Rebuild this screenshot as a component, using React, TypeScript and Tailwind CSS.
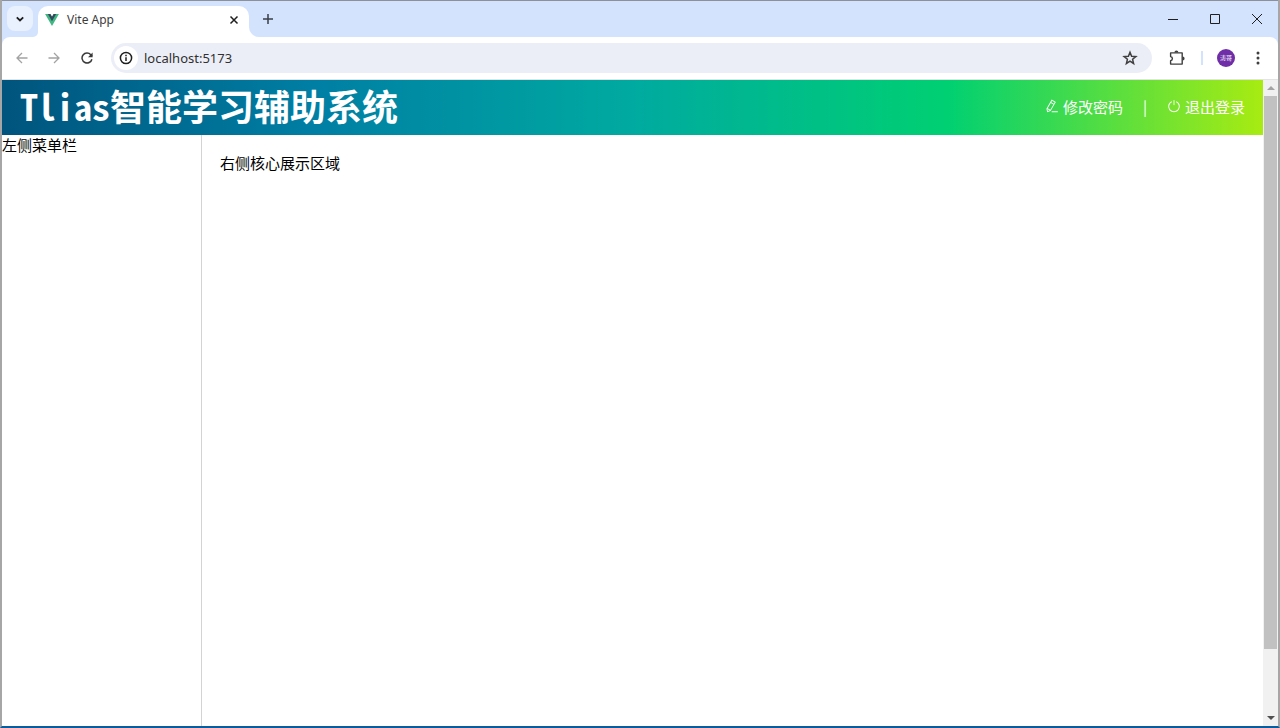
import { useState } from "react";

const iconButton = "flex items-center justify-center cursor-pointer";

function VueLogo() {
  return (
    <svg viewBox="0 0 196 170" className="w-[14px] h-3" aria-hidden="true">
      <path fill="#41b883" d="M120.8 0 98 39.5 75.2 0H0l98 170L196 0z" />
      <path fill="#35495e" d="M120.8 0 98 39.5 75.2 0H39.1L98 102 156.9 0z" />
    </svg>
  );
}

function TabStrip() {
  return (
    <div className="flex items-end h-9 bg-[#d3e2fd] shrink-0">
      <button aria-label="Search tabs" className={`${iconButton} w-[26px] h-[25px] ml-[5px] mb-[6px] rounded-lg bg-[#e9f1fe]`}>
        <svg viewBox="0 0 10 10" className="w-[10px] h-[10px]" fill="none" stroke="#1f1f1f" strokeWidth="1.8">
          <path d="M1.8 3.3 5 6.5l3.2-3.2" />
        </svg>
      </button>

      {/* Active tab */}
      <div className="flex items-end">
        <div className="w-[5px] h-2 bg-white">
          <div className="w-[5px] h-2 rounded-br-lg bg-[#d3e2fd]" />
        </div>
        <div className="flex items-center w-[211px] h-[31px] pl-[7px] pr-[7px] pb-1 rounded-t-[10px] bg-white">
          <VueLogo />
          <span className="ml-2 flex-1 text-[12px] leading-4 text-[#3c3c3c]">Vite App</span>
          <button aria-label="Close tab" className={`${iconButton} w-4 h-4`}>
            <svg viewBox="0 0 10 10" className="w-[10px] h-[10px]" stroke="#1f1f1f" strokeWidth="1.5">
              <path d="m1.5 1.5 7 7m0-7-7 7" />
            </svg>
          </button>
        </div>
        <div className="w-[10px] h-[10px] bg-white">
          <div className="w-[10px] h-[10px] rounded-bl-[10px] bg-[#d3e2fd]" />
        </div>
      </div>
      <button aria-label="New tab" className={`${iconButton} w-[18px] h-5 mb-2`}>
        <svg viewBox="0 0 12 12" className="w-3 h-3" stroke="#3a3f47" strokeWidth="1.5">
          <path d="M6 1v10M1 6h10" />
        </svg>
      </button>

      {/* Window controls */}
      <div className="flex ml-auto self-center">
        <button aria-label="Minimize" className={`${iconButton} w-[42px] h-8`}>
          <svg viewBox="0 0 10 10" className="w-[10px] h-[10px]" stroke="#1f1f1f">
            <path d="M0 5.5h10" />
          </svg>
        </button>
        <button aria-label="Maximize" className={`${iconButton} w-[42px] h-8`}>
          <svg viewBox="0 0 10 10" className="w-[10px] h-[10px]" fill="none" stroke="#1f1f1f">
            <path d="M.5.5h9v9h-9z" />
          </svg>
        </button>
        <button aria-label="Close" className={`${iconButton} w-[42px] h-8`}>
          <svg viewBox="0 0 10 10" className="w-[10px] h-[10px]" stroke="#1f1f1f">
            <path d="m0 0 10 10m0-10L0 10" />
          </svg>
        </button>
      </div>
    </div>
  );
}

function Toolbar() {
  const [starred, setStarred] = useState(false);

  return (
    <div className="bg-[#d3e2fd] shrink-0">
      <div className="flex items-center h-[43px] pl-[3px] pr-[10px] rounded-t-lg bg-white border-b border-[#e3e3e3]">
        <button aria-label="Back" className={`${iconButton} w-[33px] h-8`}>
          <svg viewBox="0 0 12 12" className="w-3 h-3" fill="none" stroke="#a3a3a3" strokeWidth="1.3">
            <path d="M11.5 6H1.2M6 1 1 6l5 5" />
          </svg>
        </button>
        <button aria-label="Forward" className={`${iconButton} w-8 h-8`}>
          <svg viewBox="0 0 12 12" className="w-3 h-3" fill="none" stroke="#a3a3a3" strokeWidth="1.3">
            <path d="M.5 6h10.3M6 1l5 5-5 5" />
          </svg>
        </button>
        <button aria-label="Reload" className={`${iconButton} w-[33px] h-8`}>
          <svg viewBox="0 0 12 12" className="w-3 h-3">
            <path fill="none" stroke="#3a3a3a" strokeWidth="1.5" d="M10.9 7.2A5 5 0 1 1 9.8 2.7L11 4" />
            <path fill="#3a3a3a" d="M11.6.5v4.7H7z" />
          </svg>
        </button>

        <div className="flex items-center flex-1 h-[30px] ml-2 pl-[3px] pr-3 rounded-full bg-[#ebeef7]">
          <button aria-label="Site information" className={`${iconButton} w-6 h-6 rounded-full bg-white`}>
            <svg viewBox="0 0 14 14" className="w-[14px] h-[14px]" fill="none" stroke="#1f1f1f" strokeWidth="1.5">
              <circle cx="7" cy="7" r="5.6" />
              <path d="M7 6.3v3.8M7 3.8v1.4" />
            </svg>
          </button>
          <input
            aria-label="Address"
            defaultValue="localhost:5173"
            className="flex-1 min-w-0 ml-[6px] bg-transparent text-[13px] leading-5 text-[#303030] outline-none"
          />
          <button aria-label="Bookmark" onClick={() => setStarred(!starred)} className={`${iconButton} w-5 h-5`}>
            <svg viewBox="0 0 16 16" className="w-4 h-4" fill={starred ? "#3f3f3f" : "none"} stroke="#3f3f3f" strokeWidth="1.5">
              <path d="m8 2.2 1.6 4 4.3.3-3.3 2.8 1 4.2L8 11.2l-3.6 2.3 1-4.2-3.3-2.8 4.3-.3z" />
            </svg>
          </button>
        </div>

        <button aria-label="Extensions" className={`${iconButton} w-5 h-5 ml-[15px]`}>
          <svg viewBox="0 0 16 16" className="w-4 h-4">
            <path
              fill="none"
              stroke="#3f3f3f"
              strokeWidth="1.4"
              strokeLinejoin="round"
              d="M1.6 2.9h11.6v11.2H1.6v-3.4c2.4-.4 2.4-3.8 0-4.2z"
            />
            <path fill="#3f3f3f" d="M5.4 2.6a2 2 0 0 1 4 0zM13.6 6.5a2 2 0 0 1 0 4z" />
          </svg>
        </button>
        <div className="w-[2px] h-[14px] mx-[14px] bg-[#d3e2fd]" />
        <button aria-label="Profile" className={`${iconButton} w-[18px] h-[18px] rounded-full bg-[#6f2da8] text-white text-[6px] leading-none`}>
          涛哥
        </button>
        <button aria-label="Menu" className={`${iconButton} w-5 h-5 ml-[13px]`}>
          <svg viewBox="0 0 4 14" className="w-1 h-[14px]" fill="#3f3f3f">
            <circle cx="2" cy="2" r="1.5" />
            <circle cx="2" cy="7" r="1.5" />
            <circle cx="2" cy="12" r="1.5" />
          </svg>
        </button>
      </div>
    </div>
  );
}

function Header() {
  return (
    <header className="flex items-center h-[55px] shrink-0 px-[18px] text-white bg-[linear-gradient(to_right,#00547d,#007fa4,#00aaa0,#00d072,#a8eb12)]">
      <h1 className="pb-[6px] text-[36px] leading-[48px] font-bold whitespace-nowrap [font-feature-settings:'hwid']">
        Tlias智能学习辅助系统
      </h1>
      <nav className="flex items-center ml-auto pb-[2px] text-[15px] leading-5 whitespace-nowrap">
        <a href="#password" className="flex items-center gap-1">
          <svg viewBox="0 0 1024 1024" className="w-[14px] h-[14px] mb-[2px]" fill="currentColor" aria-hidden="true">
            <path d="m199.04 672.64 193.984 112 224-387.968-193.92-112-224 388.032zm-23.872 60.16 32.896 148.288 144.896-45.696zM455.04 229.248l193.92 112 56.704-98.112-193.984-112zM104.32 708.8l384-665.024 304.768 175.936L409.152 884.8h.064l-248.448 78.336zm384 254.272v-64h448v64z" />
          </svg>
          修改密码
        </a>
        <span className="mx-5">|</span>
        <a href="#logout" className="flex items-center gap-1">
          <svg viewBox="0 0 1024 1024" className="w-[14px] h-[14px] mb-[2px]" fill="currentColor" aria-hidden="true">
            <path d="M352 159.872V230.4a352 352 0 1 0 320 0v-70.528A416.128 416.128 0 0 1 512 960a416 416 0 0 1-160-800.128M512 64q32 0 32 32v320q0 32-32 32t-32-32V96q0-32 32-32" />
          </svg>
          退出登录
        </a>
      </nav>
    </header>
  );
}

function Scrollbar() {
  return (
    <div className="flex flex-col w-[15px] shrink-0 pl-px bg-[#f1f1f1]" aria-hidden="true">
      <div className="flex items-center justify-center h-4">
        <div className="border-x-4 border-b-4 border-x-transparent border-b-[#a3a3a3]" />
      </div>
      <div className="flex-[9] mr-px bg-[#c1c1c1]" />
      <div className="flex-1" />
      <div className="flex items-center justify-center h-4">
        <div className="border-x-4 border-t-4 border-x-transparent border-t-[#505050]" />
      </div>
    </div>
  );
}

export default function App() {
  return (
    <div className="flex flex-col h-screen pt-px border-x-2 border-b-2 border-x-[#a6a6a6] border-b-[#0a5c9c] bg-[#8d9096] font-['Noto_Sans','Noto_Sans_CJK_SC',sans-serif]">
      <TabStrip />
      <Toolbar />
      <div className="flex flex-1 min-h-0 bg-white">
        <div className="flex flex-col flex-1 min-w-0 font-['Noto_Sans_CJK_SC',sans-serif]">
          <Header />
          <div className="flex flex-1 min-h-0 text-[15px] leading-5 text-black">
            <aside className="w-[200px] shrink-0 border-r border-[#d3d3d3]">左侧菜单栏</aside>
            <main className="flex-1 p-[18px]">右侧核心展示区域</main>
          </div>
        </div>
        <Scrollbar />
      </div>
    </div>
  );
}
